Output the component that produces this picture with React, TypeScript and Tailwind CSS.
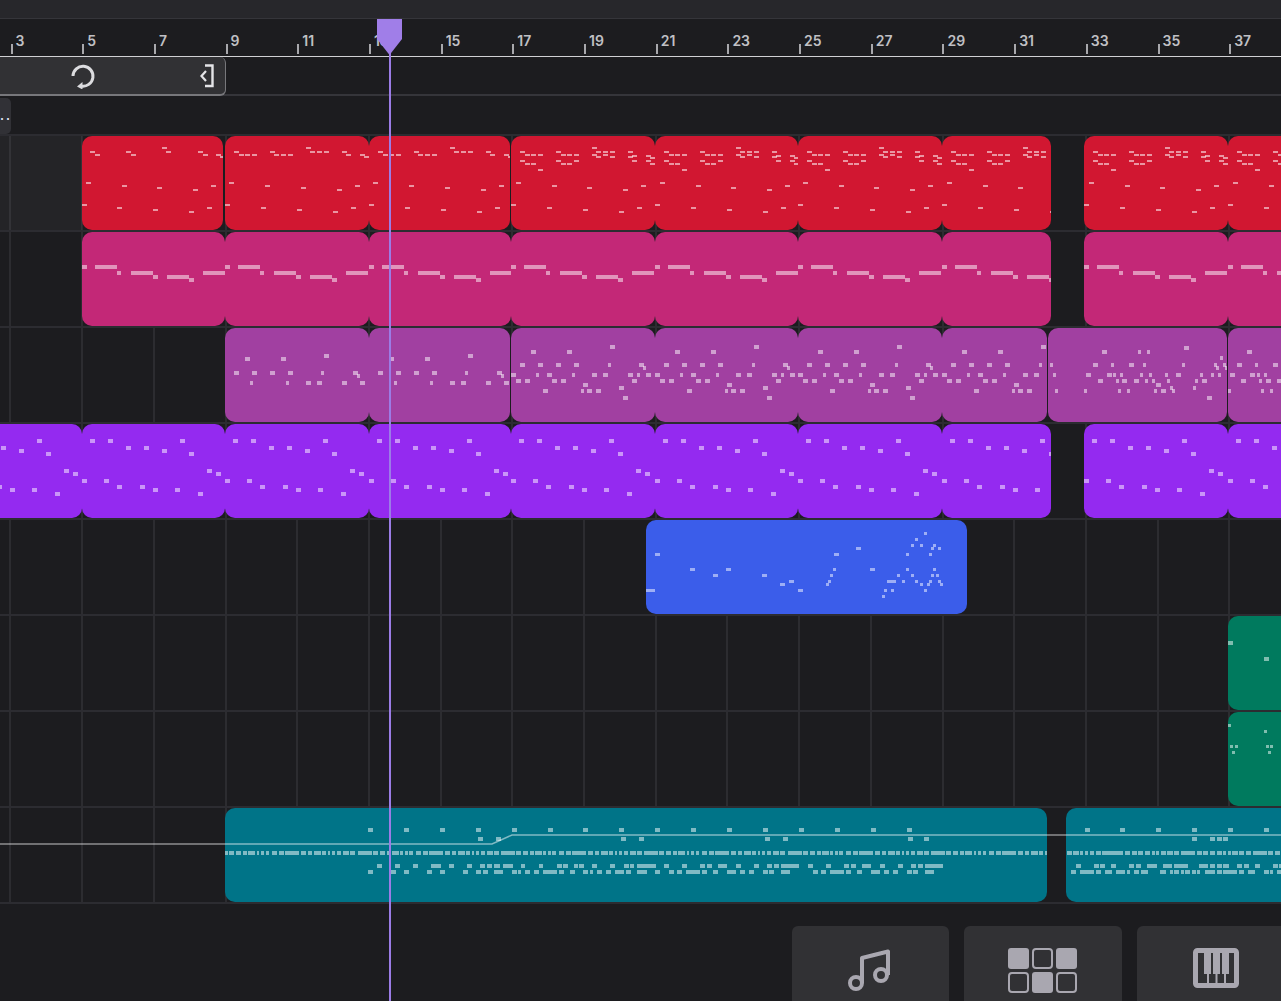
import React from "react";

type N = [number, number, number?, number?];
type Clip = { l: number; w: number; notes?: N[]; nw?: number; nh?: number };

// notes are written as page x, page y; rebased to the start of their pattern
const rebase = (bx: number, by: number, list: N[]): N[] =>
  list.map(([x, y, w, h]) => [x - bx, y - by, w, h]);

const redA = rebase(82, 136, [
  [90, 151], [95, 154], [126, 151], [131, 154], [162, 147], [166, 151], [198, 151], [203, 154], [216, 154], [220, 156],
  [86, 182], [122, 185], [157, 187], [193, 189], [211, 185],
  [82, 204], [117, 207], [153, 209], [189, 211], [207, 207],
]);
const redB = rebase(225, 136, [
  [234, 151], [239, 154], [245, 154], [252, 154], [270, 151], [274, 154], [281, 154], [288, 154],
  [306, 147], [310, 151], [317, 151], [324, 151], [342, 151], [346, 154], [360, 154], [364, 156],
  [229, 182], [265, 185], [301, 187], [337, 189], [355, 185],
  [225, 204], [261, 207], [297, 209], [333, 211], [351, 207],
]);
const redC = rebase(511, 136, [
  [520, 151], [525, 154], [531, 154], [538, 154], [556, 151], [561, 154], [567, 154], [574, 154],
  [592, 147], [596, 151], [603, 151], [610, 151], [628, 151], [632, 155], [646, 155], [650, 157],
  [520, 160], [525, 163], [531, 163], [538, 169], [556, 160], [561, 163], [567, 163], [574, 160],
  [592, 154], [596, 156], [603, 154], [610, 156], [628, 156], [632, 160], [646, 160], [650, 163],
  [516, 182], [552, 185], [587, 187], [623, 189], [641, 185],
  [511, 204], [547, 207], [583, 209], [619, 211], [637, 207],
]);
const pink = rebase(225, 232, [
  [225, 265, 5], [238, 265, 22], [260, 271, 4], [274, 271, 22], [296, 275, 5], [310, 275, 22], [332, 278, 5], [346, 271, 22],
]);
const mauveA = rebase(225, 328, [
  [245, 357], [281, 357], [324, 354], [234, 371], [252, 371], [270, 371], [288, 371], [321, 371, 3], [353, 371], [357, 374, 3],
  [250, 381, 3], [286, 381, 3], [306, 381], [317, 381], [342, 381], [360, 381],
]);
const mauveC = rebase(511, 328, [
  [531, 350], [567, 350], [610, 345], [520, 363], [538, 363], [556, 363], [574, 363], [608, 363, 3], [639, 363], [643, 366, 3],
  [511, 373], [536, 373, 3], [547, 373], [572, 373, 3], [592, 373], [603, 373], [628, 373], [637, 373, 3], [646, 373],
  [516, 379], [525, 379], [552, 379], [561, 379], [632, 379], [583, 383], [619, 386],
  [543, 389], [581, 389, 3], [587, 389], [596, 389], [623, 396],
]);
const mauveD = rebase(1048, 328, [
  [1102, 350], [1138, 350, 3], [1147, 350, 3], [1184, 346], [1220, 356, 3], [1050, 363, 3], [1093, 363], [1111, 363, 3], [1129, 363],
  [1143, 363, 3], [1182, 363, 3], [1214, 363, 3], [1223, 363, 3], [1216, 366, 3], [1225, 366, 2],
  [1053, 373, 3], [1086, 373], [1107, 373], [1113, 373, 3], [1120, 373, 3], [1140, 373, 3], [1149, 373, 3], [1165, 373, 3], [1176, 373], [1200, 373, 3], [1211, 373, 3], [1218, 373, 3],
  [1098, 379], [1116, 379, 3], [1122, 379], [1134, 379], [1145, 379, 3], [1152, 379, 3], [1167, 379, 3], [1195, 379, 3], [1202, 379],
  [1156, 383], [1193, 386, 3], [1170, 386, 3], [1055, 389, 3], [1084, 389, 3], [1118, 389, 3], [1127, 389, 3], [1154, 389, 3], [1161, 389], [1172, 389, 3], [1207, 396],
]);
const mauveE = rebase(1228, 328, [
  [1247, 350], [1237, 363], [1255, 363, 3], [1273, 363], [1230, 373], [1250, 373], [1257, 373, 3], [1264, 373, 3],
  [1241, 379], [1259, 379, 3], [1266, 379], [1277, 379], [1228, 389, 3], [1261, 389, 3], [1270, 389, 3],
]);
const violet = rebase(82, 424, [
  [90, 439], [108, 439], [126, 446], [144, 446], [162, 449], [180, 439], [189, 452], [207, 469], [216, 472],
  [82, 479], [104, 479], [117, 485], [140, 485], [153, 488], [175, 488], [198, 492],
]);
const blue = rebase(646, 520, [
  [655, 553, 5, 3], [690, 568, 5, 3], [713, 574, 5, 3], [726, 568, 5, 3], [762, 574, 5, 3], [780, 583, 5, 3], [789, 580, 5, 3], [798, 589, 5, 3],
  [646, 589, 9, 3], [834, 553, 5, 3], [856, 547, 5, 3], [870, 568, 5, 3],
  ...([
    [924, 532], [915, 538], [911, 544], [920, 544], [933, 544], [931, 547], [938, 547], [906, 553], [929, 553], [833, 568], [830, 574], [828, 580], [826, 583],
    [906, 568], [933, 568], [911, 574], [897, 574], [931, 574], [936, 574], [887, 580], [890, 580], [893, 580], [902, 580], [915, 580], [929, 580], [938, 580],
    [920, 583], [927, 583], [940, 583], [884, 589], [891, 589], [924, 589], [882, 595],
  ] as [number, number][]).map(([x, y]): N => [x, y, 3, 3]),
]);
const green1: N[] = [[0, 25, 5, 4], [36, 41, 5, 4]];
const green2: N[] = [[0, 12, 3, 3], [36, 18, 3, 3], [2, 33, 3, 3], [7, 33, 3, 3], [4, 39, 3, 3], [38, 33, 3, 3], [42, 33, 3, 3], [40, 39, 3, 3]];

// runs of notes along one pitch, given as [from, to] in 3x crop units
const segs = (ox: number, list: [number, number][], y: number, h = 4): N[] =>
  list.map(([a, b]) => [ox + a / 3, y, (b - a) / 3, h]);

const mainPeriod: [number, number][] = [
  [3, 45], [48, 63], [69, 84], [90, 102], [105, 126], [130, 138], [144, 153], [157, 168], [177, 192], [198, 213],
  [216, 258], [264, 279], [285, 297], [303, 324], [327, 339], [345, 351], [357, 366], [372, 384], [390, 408], [411, 426],
];
const tealMain: N[] = [-2, -1, 0, 1, 2, 3].flatMap((k) => segs(500 + k * 143.4, mainPeriod, 851));
const row866: [number, number][] = [
  [9, 39], [63, 75], [117, 129], [171, 186], [189, 204], [222, 234], [237, 252], [276, 291], [330, 345], [372, 387], [390, 402], [411, 468],
  [492, 507], [546, 561], [600, 615], [621, 636], [654, 681], [708, 723], [762, 777], [801, 816], [822, 837], [843, 897],
];
const row872: [number, number][] = [
  [0, 9], [36, 51], [54, 63], [75, 90], [102, 117], [129, 171], [177, 192], [210, 225], [249, 264], [270, 279], [291, 306], [318, 333], [345, 372], [378, 393], [411, 441],
  [465, 480], [507, 522], [531, 546], [558, 600], [606, 621], [639, 654], [681, 708], [720, 735], [747, 762], [789, 804], [807, 822], [843, 870],
];
const tealA: N[] = [
  ...tealMain,
  ...segs(220, [[471, 486], [525, 540], [579, 594], [633, 663], [687, 702], [741, 756], [780, 795], [801, 816], [822, 840]], 864),
  ...segs(220, [[444, 459], [510, 528], [552, 567], [621, 636], [660, 675], [729, 744], [768, 783], [789, 804], [822, 840]], 870),
  ...segs(500, row866, 864),
  ...segs(500, row872, 870),
  ...segs(500 + 143.7, row866.filter(([a]) => a >= 468), 864).filter((n) => n[0] < 944),
  ...segs(500 + 143.7, row872.filter(([a]) => a >= 468), 870).filter((n) => n[0] < 936),
  ...[0, 1, 2, 3, 4, 5, 6, 7, 8, 9, 10, 11, 12, 13, 14, 15].map((i): N => [368 + i * 35.9, 828, 5, 4]),
  ...[478, 496, 621, 639, 765, 783, 908, 924].map((x): N => [x, 837, 5, 4]),
];
const before = (notes: N[], x: number) => notes.filter((n) => n[0] < x);
const tealB: N[] = [
  ...before(segs(900, [[501, 516], [519, 537], [540, 549], [555, 564], [570, 582], [588, 603], [606, 669], [675, 690], [696, 711], [714, 729], [735, 750], [756, 765], [768, 777], [783, 798]], 851), 1160),
  ...segs(1160, [[3, 18], [21, 39], [42, 57], [63, 105], [111, 126], [129, 144], [150, 165], [171, 186], [189, 198], [204, 213], [216, 234], [237, 252], [258, 273], [279, 321], [324, 339], [345, 360]], 851),
  ...before(segs(900, [[528, 543], [582, 597], [600, 615], [633, 648], [687, 702], [708, 723], [741, 771]], 864), 1160),
  ...segs(1160, [[9, 36], [42, 84], [117, 144], [150, 165], [171, 186], [189, 207], [231, 246], [252, 267], [285, 300], [339, 354], [357, 363]], 864),
  ...before(segs(900, [[513, 528], [540, 582], [588, 603], [615, 636], [648, 675], [681, 690], [702, 717], [723, 744]], 870), 1160),
  ...segs(1160, [[0, 18], [30, 39], [42, 57], [63, 72], [75, 90], [96, 108], [111, 120], [135, 165], [171, 186], [189, 231], [237, 252], [264, 285], [312, 327], [330, 339], [351, 363]], 870),
  ...[1085, 1120, 1156, 1192, 1228, 1264].map((x): N => [x, 828, 5, 4]),
  ...[1192, 1210, 1217, 1223].map((x): N => [x, 837, 5, 4]),
];

const tealClipsA = rebase(225, 808, tealA);
const tealClipsB = rebase(1066, 808, tealB);

const barStarts = [82, 225, 369, 511, 655, 798, 942];

function Notes({ notes, w, h, opacity }: { notes: N[]; w: number; h: number; opacity: number }) {
  return (
    <svg className="absolute left-0 top-0" width="100%" height="100%" shapeRendering="crispEdges">
      {notes.map((n, i) => (
        <rect key={i} x={n[0]} y={n[1]} width={n[2] ?? w} height={n[3] ?? h} fill="#ffffff" fillOpacity={opacity} />
      ))}
    </svg>
  );
}

function Track({ clips, color, nw, nh, opacity = 0.5, children }: { clips: Clip[]; color: string; nw: number; nh: number; opacity?: number; children?: React.ReactNode }) {
  return (
    <div className="relative h-[96px] border-t-2 border-[#2c2c31]">
      {children}
      {clips.map((c, i) => (
        <div key={i} className={`absolute top-0 h-[94px] overflow-hidden rounded-[10px] ${color}`} style={{ left: c.l, width: c.w }}>
          {c.notes && <Notes notes={c.notes} w={nw} h={nh} opacity={opacity} />}
        </div>
      ))}
    </div>
  );
}

const redClips: Clip[] = [
  { l: 82, w: 141, notes: redA },
  { l: 225, w: 143.5, notes: redB },
  { l: 369, w: 141, notes: redB },
  { l: 511, w: 143.5, notes: redC },
  { l: 655, w: 143, notes: redC },
  { l: 798, w: 143.5, notes: redC },
  { l: 942, w: 109, notes: redC },
  { l: 1084, w: 143.5, notes: redC },
  { l: 1228, w: 100, notes: redC },
];
const joined = (notes: N[]): Clip[] => [
  ...barStarts.map((l, i) => ({ l, w: i === 6 ? 109 : barStarts[i + 1] - l, notes })),
  { l: 1084, w: 144, notes },
  { l: 1228, w: 100, notes },
];
const mauveClips: Clip[] = [
  { l: 225, w: 144, notes: mauveA },
  { l: 369, w: 141, notes: mauveA },
  { l: 511, w: 143.5, notes: mauveC },
  { l: 655, w: 143, notes: mauveC },
  { l: 798, w: 144, notes: mauveC },
  { l: 942, w: 105, notes: mauveC },
  { l: 1048, w: 179, notes: mauveD },
  { l: 1228, w: 100, notes: mauveE },
];
const labels = [3, 5, 7, 9, 11, 13, 15, 17, 19, 21, 23, 25, 27, 29, 31, 33, 35, 37];

export default function App() {
  return (
    <div className="relative flex h-[1001px] w-[1281px] flex-col overflow-hidden bg-[#1c1c1f] font-['Inter',sans-serif]">
      <div className="h-[19px] flex-none border-b border-[#35353a] bg-[#27272b]" />

      <div className="flex h-[38px] flex-none items-end border-b border-[#d0d0d3] pl-[10.5px]">
        {labels.map((n) => (
          <div key={n} className="flex w-[71.7px] flex-none items-end pb-[2px]">
            <span className="h-[10px] w-[2px] bg-[#a8a8ac]" />
            <span className="mb-[5px] ml-[3px] text-[14px] font-semibold leading-[16px] text-[#c0c0c4]">{n}</span>
          </div>
        ))}
      </div>

      <div className="h-[39px] flex-none border-b-2 border-[#35353a]">
        <div className="flex h-[39px] w-[226px] items-center justify-between rounded-r-[6px] border-b-2 border-r border-[#77777b] bg-[#313134] pl-[70px] pr-[10px]">
          <svg width="26" height="26" viewBox="0 0 26 26" fill="none">
            <path d="M3 13 A10 10 0 1 1 11 23" stroke="#dcdcdf" strokeWidth="3" />
            <path d="M7 23.5 L12.5 19 L12.5 26.5 Z" fill="#dcdcdf" />
          </svg>
          <svg width="16" height="24" viewBox="0 0 16 24" fill="none">
            <path d="M6 1.5 H13.5 V22 H6" stroke="#e4e4e7" strokeWidth="2.4" />
            <path d="M7 7 L2.5 12 L7 17" stroke="#e4e4e7" strokeWidth="2.2" />
          </svg>
        </div>
      </div>

      <div className="flex h-[38px] flex-none items-end">
        <div className="flex h-[36px] w-[11px] items-end overflow-hidden rounded-r-[5px] bg-[#313136] pb-[11px]">
          <span className="whitespace-nowrap text-[12px] font-bold leading-[14px] tracking-[2px] text-[#dfe9f5]">..</span>
        </div>
      </div>

      <div className="flex-none bg-[repeating-linear-gradient(90deg,transparent_0,transparent_9.5px,#2c2c30_9.5px,#2c2c30_11.5px,transparent_11.5px,transparent_71.7px)]">
        <Track clips={redClips} color="bg-[#d11731]" nw={5} nh={2} opacity={0.55}>
          <div className="absolute left-0 top-0 h-[94px] w-[82px] bg-white/[0.035]" />
        </Track>
        <Track clips={joined(pink)} color="bg-[#c32877]" nw={5} nh={4} />
        <Track clips={mauveClips} color="bg-[#a140a1]" nw={5} nh={4} />
        <Track clips={[{ l: -61, w: 143, notes: violet }, ...joined(violet)]} color="bg-[#942af0]" nw={5} nh={4} />
        <Track clips={[{ l: 646, w: 321, notes: blue }]} color="bg-[#3b5dea]" nw={5} nh={3} />
        <Track clips={[{ l: 1228, w: 100, notes: green1 }]} color="bg-[#007a5e]" nw={5} nh={4} />
        <Track clips={[{ l: 1228, w: 100, notes: green2 }]} color="bg-[#007a5e]" nw={3} nh={3} />
        <Track
          clips={[
            { l: 225, w: 822, notes: tealClipsA },
            { l: 1066, w: 260, notes: tealClipsB },
          ]}
          color="bg-[#007488]"
          nw={5}
          nh={4}
        >
          <svg className="absolute left-0 top-0 z-10" width="1281" height="94" fill="none">
            <path d="M0 36 H492 L512 27 H1281" stroke="#ffffff" strokeOpacity="0.5" strokeWidth="1.5" />
          </svg>
        </Track>
      </div>

      <div className="flex flex-1 gap-[15px] border-t-2 border-[#2c2c31] pl-[792px] pt-[22px]">
        <div className="flex w-[157px] flex-none justify-center rounded-t-[6px] bg-[#313134] pt-[22px]">
          <svg className="mr-[4px]" width="46" height="44" viewBox="0 0 46 44" fill="none" stroke="#a9a7b0" strokeWidth="4">
            <circle cx="10" cy="35" r="6" />
            <circle cx="35" cy="27" r="6" />
            <path d="M16 35 V10 L42 3.5 V27" strokeLinejoin="round" />
          </svg>
        </div>
        <div className="flex w-[158px] flex-none justify-center rounded-t-[6px] bg-[#313134] pt-[22px]">
          <svg width="70" height="46" viewBox="0 0 70 46">
            <rect x="0" y="0" width="21" height="21" rx="3" fill="#a9a7b0" />
            <rect x="25" y="1" width="19" height="19" rx="3" fill="none" stroke="#a9a7b0" strokeWidth="2" />
            <rect x="48" y="0" width="21" height="21" rx="3" fill="#a9a7b0" />
            <rect x="1" y="25" width="19" height="19" rx="3" fill="none" stroke="#a9a7b0" strokeWidth="2" />
            <rect x="24" y="24" width="21" height="21" rx="3" fill="#a9a7b0" />
            <rect x="49" y="25" width="19" height="19" rx="3" fill="none" stroke="#a9a7b0" strokeWidth="2" />
          </svg>
        </div>
        <div className="flex w-[158px] flex-none justify-center rounded-t-[6px] bg-[#313134] pt-[22px]">
          <svg width="46" height="40" viewBox="0 0 46 40" fill="#a9a7b0">
            <rect x="2.5" y="2.5" width="41" height="35" rx="2" fill="none" stroke="#a9a7b0" strokeWidth="5" />
            <rect x="11" y="2" width="7" height="24" />
            <rect x="20" y="2" width="7" height="24" />
            <rect x="29" y="2" width="7" height="24" />
            <rect x="14" y="24" width="2" height="14" />
            <rect x="22.5" y="24" width="2" height="14" />
            <rect x="31" y="24" width="2" height="14" />
          </svg>
        </div>
      </div>

      <div className="absolute bottom-0 left-[389px] top-[50px] z-20 w-[2px] bg-[#9b7ce6]" />
      <svg className="absolute left-[377px] top-[19px] z-30" width="25" height="36" viewBox="0 0 25 36">
        <path d="M0 0 H25 V20 L12.5 36 L0 20 Z" fill="#a07ee8" />
      </svg>
    </div>
  );
}
